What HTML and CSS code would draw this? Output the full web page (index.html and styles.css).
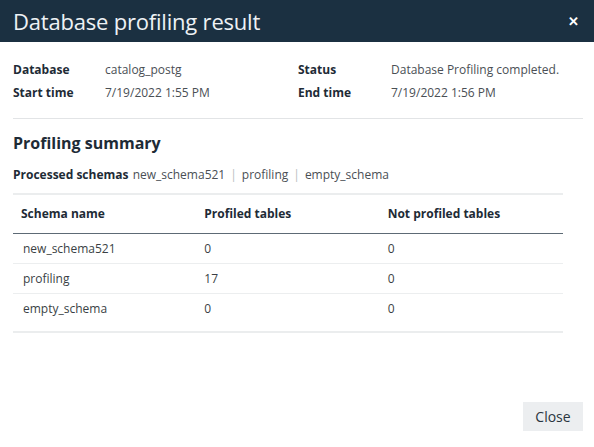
FILE: index.html
```html
<!DOCTYPE html>
<html>
<head>
<meta charset="utf-8">
<link rel="stylesheet" href="styles.css">
</head>
<body>
<div class="dialog">
  <div class="header">
    <h1 class="title">Database profiling result</h1>
    <span class="close-x">✕</span>
  </div>
  <div class="content">
    <div class="info">
      <div class="label">Database</div><div class="value">catalog_postg</div>
      <div class="label">Status</div><div class="value">Database Profiling completed.</div>
      <div class="label">Start time</div><div class="value">7/19/2022 1:55 PM</div>
      <div class="label">End time</div><div class="value">7/19/2022 1:56 PM</div>
    </div>
    <div class="divider"></div>
    <h2 class="summary-title">Profiling summary</h2>
    <div class="processed">
      <span class="label">Processed schemas</span>
      <span class="value">new_schema521</span><span class="sep">|</span><span class="value">profiling</span><span class="sep">|</span><span class="value">empty_schema</span>
    </div>
    <div class="table-wrap">
      <table class="grid">
        <thead>
          <tr><th>Schema name</th><th>Profiled tables</th><th>Not profiled tables</th></tr>
        </thead>
        <tbody>
          <tr><td>new_schema521</td><td>0</td><td>0</td></tr>
          <tr><td>profiling</td><td>17</td><td>0</td></tr>
          <tr><td>empty_schema</td><td>0</td><td>0</td></tr>
        </tbody>
      </table>
    </div>
  </div>
  <div class="footer">
    <button class="btn">Close</button>
  </div>
</div>
</body>
</html>
```
FILE: styles.css
```css
html, body {
  margin: 0;
  padding: 0;
  background: #ffffff;
}
body {
  font-family: "Open Sans", "Noto Sans", sans-serif;
  color: #1e2b36;
}
.dialog {
  width: 594px;
  height: 447px;
  display: flex;
  flex-direction: column;
}
.header {
  height: 42px;
  background: #1b3041;
  display: flex;
  align-items: center;
  justify-content: space-between;
  padding: 0 15px 0 13px;
  flex-shrink: 0;
}
.title {
  margin: 0;
  font-size: 22px;
  font-weight: 400;
  color: #eef2f5;
  line-height: 28px;
  letter-spacing: -0.2px;
}
.close-x {
  color: #ffffff;
  font-size: 13px;
  font-weight: 700;
  line-height: 13px;
}
.content {
  padding: 0 11px 0 13px;
}
.info {
  display: grid;
  grid-template-columns: 92px 193px 93px 1fr;
  row-gap: 5px;
  margin-top: 19px;
  font-size: 12px;
  line-height: 18px;
}
.label {
  font-weight: 700;
  color: #1e2b36;
  font-size: 12px;
}
.value {
  color: #4a4f55;
  font-size: 12px;
}
.divider {
  height: 1px;
  background: #e2e4e6;
  margin-top: 16px;
}
.summary-title {
  margin: 13px 0 0 0;
  font-size: 16px;
  font-weight: 700;
  line-height: 22px;
  color: #1e2b36;
}
.processed {
  margin-top: 12px;
  font-size: 12px;
  line-height: 18px;
}
.processed .label {
  margin-right: 1px;
}
.sep {
  color: #b8bdc2;
  margin: 0 5px;
  font-size: 12px;
}
.table-wrap {
  margin-top: 9px;
  width: 550px;
  border-top: 2px solid #ebedee;
  border-bottom: 2px solid #ebedee;
  padding-bottom: 7px;
}
.grid {
  width: 100%;
  border-collapse: collapse;
  table-layout: fixed;
  font-size: 12px;
}
.grid th {
  text-align: left;
  font-weight: 700;
  color: #1e2b36;
  height: 38px;
  padding: 0 8px;
  border-bottom: 1px solid #5d6a75;
  line-height: 18px;
}
.grid td {
  height: 29px;
  padding: 0 8px;
  color: #3a3f45;
  line-height: 18px;
  border-bottom: 1px solid #eceeef;
}
.grid td:first-child {
  padding-left: 10px;
}
.grid tbody tr:last-child td {
  border-bottom: none;
  height: 30px;
}
.footer {
  margin-top: auto;
  display: flex;
  justify-content: flex-end;
  padding: 0 11px 16px 0;
}
.btn {
  width: 60px;
  height: 29px;
  border: none;
  background: #eceef0;
  color: #2a3540;
  font-family: "Open Sans", "Noto Sans", sans-serif;
  font-size: 14px;
  padding: 0;
  cursor: pointer;
}
```
